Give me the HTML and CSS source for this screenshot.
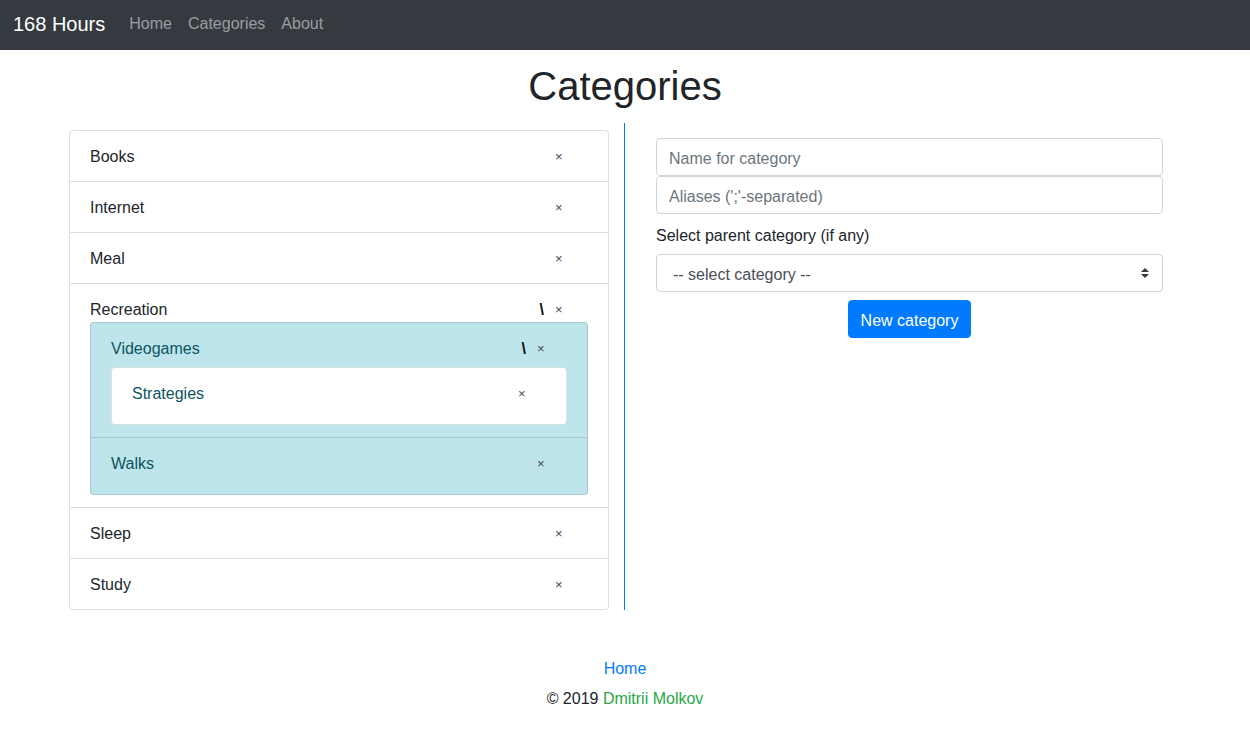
FILE: index.html
```html
<!DOCTYPE html>
<html lang="en">
<head>
<meta charset="utf-8">
<title>168 Hours - Categories</title>
<link rel="stylesheet" href="styles.css">
</head>
<body>
<nav class="navbar">
  <a class="brand" href="#">168 Hours</a>
  <a class="nav-link" href="#">Home</a>
  <a class="nav-link" href="#">Categories</a>
  <a class="nav-link" href="#">About</a>
</nav>

<h1 class="title">Categories</h1>

<div class="main">
  <div class="col-left">
    <ul class="list">
      <li class="item">
        <div class="row"><span class="name">Books</span><span class="actions"><span class="x">×</span></span></div>
      </li>
      <li class="item">
        <div class="row"><span class="name">Internet</span><span class="actions"><span class="x">×</span></span></div>
      </li>
      <li class="item">
        <div class="row"><span class="name">Meal</span><span class="actions"><span class="x">×</span></span></div>
      </li>
      <li class="item">
        <div class="row"><span class="name">Recreation</span><span class="actions"><span class="slash">\</span><span class="x">×</span></span></div>
        <ul class="sublist info">
          <li class="subitem">
            <div class="row"><span class="name">Videogames</span><span class="actions a2"><span class="slash">\</span><span class="x">×</span></span></div>
            <ul class="sublist white">
              <li class="subitem leaf">
                <div class="row"><span class="name">Strategies</span><span class="actions a3"><span class="x">×</span></span></div>
              </li>
            </ul>
          </li>
          <li class="subitem leaf">
            <div class="row"><span class="name">Walks</span><span class="actions a2"><span class="x">×</span></span></div>
          </li>
        </ul>
      </li>
      <li class="item">
        <div class="row"><span class="name">Sleep</span><span class="actions"><span class="x">×</span></span></div>
      </li>
      <li class="item">
        <div class="row"><span class="name">Study</span><span class="actions"><span class="x">×</span></span></div>
      </li>
    </ul>
  </div>

  <div class="col-right">
    <form class="form">
      <input class="control" type="text" placeholder="Name for category">
      <input class="control" type="text" placeholder="Aliases (';'-separated)">
      <label class="label">Select parent category (if any)</label>
      <div class="select-wrap">
        <select class="select"><option>-- select category --</option></select>
        <svg class="select-arrow" width="8" height="10" viewBox="0 0 4 5"><path fill="#343a40" d="M2 0L0 2h4zm0 5L0 3h4z"/></svg>
      </div>
      <div class="btn-row"><button type="button" class="btn">New category</button></div>
    </form>
  </div>
</div>

<footer class="footer">
  <div><a href="#" class="foot-link">Home</a></div>
  <div>© 2019 <a href="#" class="author">Dmitrii Molkov</a></div>
</footer>
</body>
</html>
```

FILE: styles.css
```css
* { box-sizing: border-box; }
html, body { margin: 0; padding: 0; }
body {
  font-family: "Liberation Sans", Arial, sans-serif;
  font-size: 16px;
  line-height: 24px;
  color: #212529;
  background: #fff;
}
a { text-decoration: none; }

.navbar {
  height: 50px;
  background: #343a40;
  display: flex;
  align-items: center;
  padding: 0 13px 2px;
}
.brand {
  color: #fff;
  font-size: 20px;
  line-height: 30px;
  margin-right: 16px;
}
.nav-link {
  color: rgba(255,255,255,.5);
  padding: 8px;
  font-size: 16px;
}

.title {
  margin: 12px 0 13px;
  text-align: center;
  font-size: 40px;
  line-height: 48px;
  font-weight: 400;
  color: #212529;
}

.main {
  width: 1140px;
  margin: 0 auto;
  display: flex;
}
.col-left {
  width: 569px;
  padding: 7px 15px 0 14px;
}
.col-right {
  width: 571px;
  border-left: 1px solid #007bff;
  padding: 15px 32px 0 31px;
}

.list, .sublist {
  list-style: none;
  margin: 0;
  padding: 0;
}
.list {
  border: 1px solid rgba(0,0,0,.125);
  border-radius: 4px;
}
.item {
  padding: 12px 20px;
  border-top: 1px solid rgba(0,0,0,.125);
}
.item:first-child { border-top: 0; }

.row {
  height: 26px;
  display: flex;
  align-items: center;
}
.name { flex: 1; padding-top: 2px; }
.actions {
  display: flex;
  align-items: center;
  margin-right: 26px;
  padding-top: 2px;
}
.actions.a2 { margin-right: 23px; }
.actions.a3 { margin-right: 21px; }
.x {
  font-size: 13px;
  line-height: 12px;
  color: #4a4a4a;
  width: 7px;
  text-align: center;
}
.slash {
  font-weight: 700;
  font-size: 16px;
  color: #111;
  margin-right: 11px;
}

.sublist {
  border: 1px solid rgba(0,0,0,.125);
  border-radius: 4px;
}
.sublist.info {
  background: #bee5eb;
  color: #0c5460;
}
.sublist.white {
  background: #fff;
  margin-top: 6px;
}
.subitem {
  padding: 12px 20px;
  border-top: 1px solid rgba(0,0,0,.125);
}
.subitem:first-child { border-top: 0; }
.subitem.leaf { padding-bottom: 18px; }

.form {
  display: flex;
  flex-direction: column;
}
.control, .select {
  display: block;
  width: 100%;
  height: 38px;
  padding: 8px 12px 4px;
  font-family: inherit;
  font-size: 16px;
  line-height: 24px;
  color: #495057;
  background: #fff;
  border: 1px solid #ced4da;
  border-radius: 4px;
  outline: none;
}
.control::placeholder { color: #6c757d; opacity: 1; }
.label {
  margin-top: 10px;
  margin-bottom: 6px;
  display: block;
}
.select-wrap { position: relative; }
.select {
  appearance: none;
  -webkit-appearance: none;
  padding: 8px 12px 4px 16px;
}
.select-arrow {
  position: absolute;
  right: 14px;
  top: 14px;
  pointer-events: none;
}
.btn-row {
  display: flex;
  justify-content: center;
  margin-top: 8px;
}
.btn {
  font-family: inherit;
  font-size: 16px;
  line-height: 24px;
  padding: 8px 12px 4px;
  background: #007bff;
  color: #fff;
  border: 1px solid #007bff;
  border-radius: 4px;
}

.footer {
  margin-top: 47px;
  text-align: center;
  display: flex;
  flex-direction: column;
  gap: 6px;
}
.foot-link { color: #007bff; }
.author { color: #28a745; }
```
